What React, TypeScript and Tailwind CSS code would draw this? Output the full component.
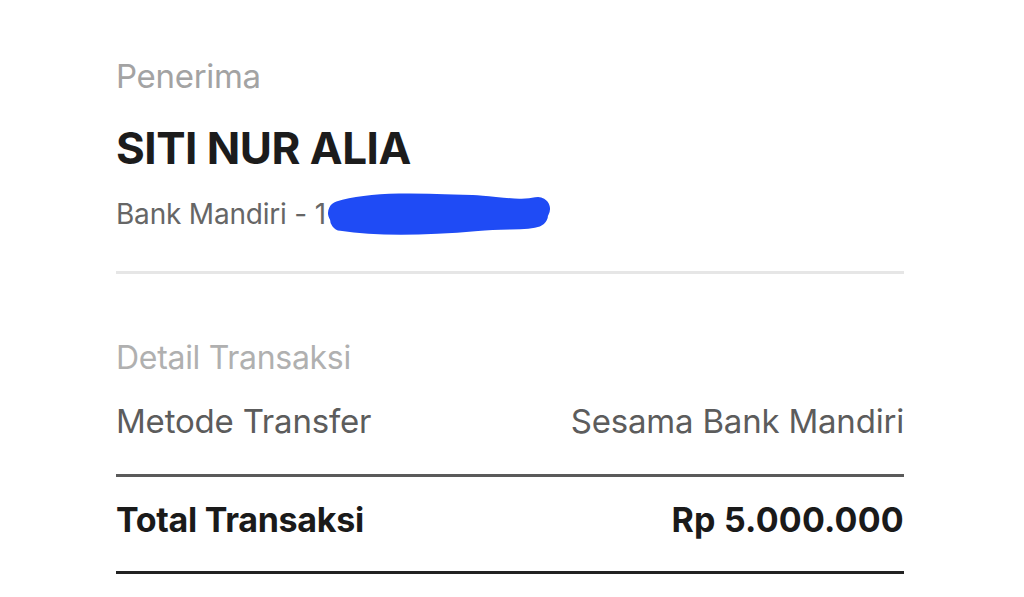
import React from "react";

export default function App() {
  return (
    <div
      className="w-[1024px] h-[597px] bg-white overflow-hidden"
      style={{ fontFamily: "Inter, 'Noto Sans', sans-serif" }}
    >
      <div className="ml-[116px] w-[788px] flex flex-col">
        <div className="mt-[55px] h-[44px] flex items-center text-[33px] text-[#a3a3a3] tracking-[-0.3px]">
          Penerima
        </div>
        <div className="mt-[25px] h-[48px] flex items-center text-[44px] font-bold text-[#1c1c1c] tracking-[-0.5px]">
          SITI NUR ALIA
        </div>
        <div className="mt-[25px] h-[34px] flex items-center text-[28px] text-[#666666] tracking-[-0.2px] relative">
          <span>Bank Mandiri - 1</span>
          <svg
            className="absolute left-[196px] top-[-14px]"
            width="240"
            height="60"
            viewBox="0 0 240 60"
          >
            <path
              d="M28 30 C 60 20, 110 22, 160 24 C 190 26, 210 30, 226 26 M30 36 C 70 42, 120 40, 165 36 C 195 33, 212 36, 224 32"
              stroke="#1f4bf5"
              strokeWidth="24"
              strokeLinecap="round"
              fill="none"
            />
          </svg>
        </div>
        <div className="mt-[40px] h-[3px] bg-[#e6e6e6]" />
        <div className="mt-[62px] h-[44px] flex items-center text-[32px] text-[#b0b0b0] tracking-[-0.3px]">
          Detail Transaksi
        </div>
        <div className="mt-[20px] h-[44px] flex items-center justify-between text-[33px] text-[#5c5c5c] tracking-[-0.2px]">
          <span>Metode Transfer</span>
          <span>Sesama Bank Mandiri</span>
        </div>
        <div className="mt-[30px] h-[3px] bg-[#5a5a5a]" />
        <div className="mt-[20px] h-[44px] flex items-center justify-between text-[34px] font-bold text-[#1a1a1a] tracking-[-0.3px]">
          <span>Total Transaksi</span>
          <span className="tracking-[0.2px]">Rp 5.000.000</span>
        </div>
        <div className="mt-[30px] h-[3px] bg-[#222222]" />
      </div>
    </div>
  );
}
